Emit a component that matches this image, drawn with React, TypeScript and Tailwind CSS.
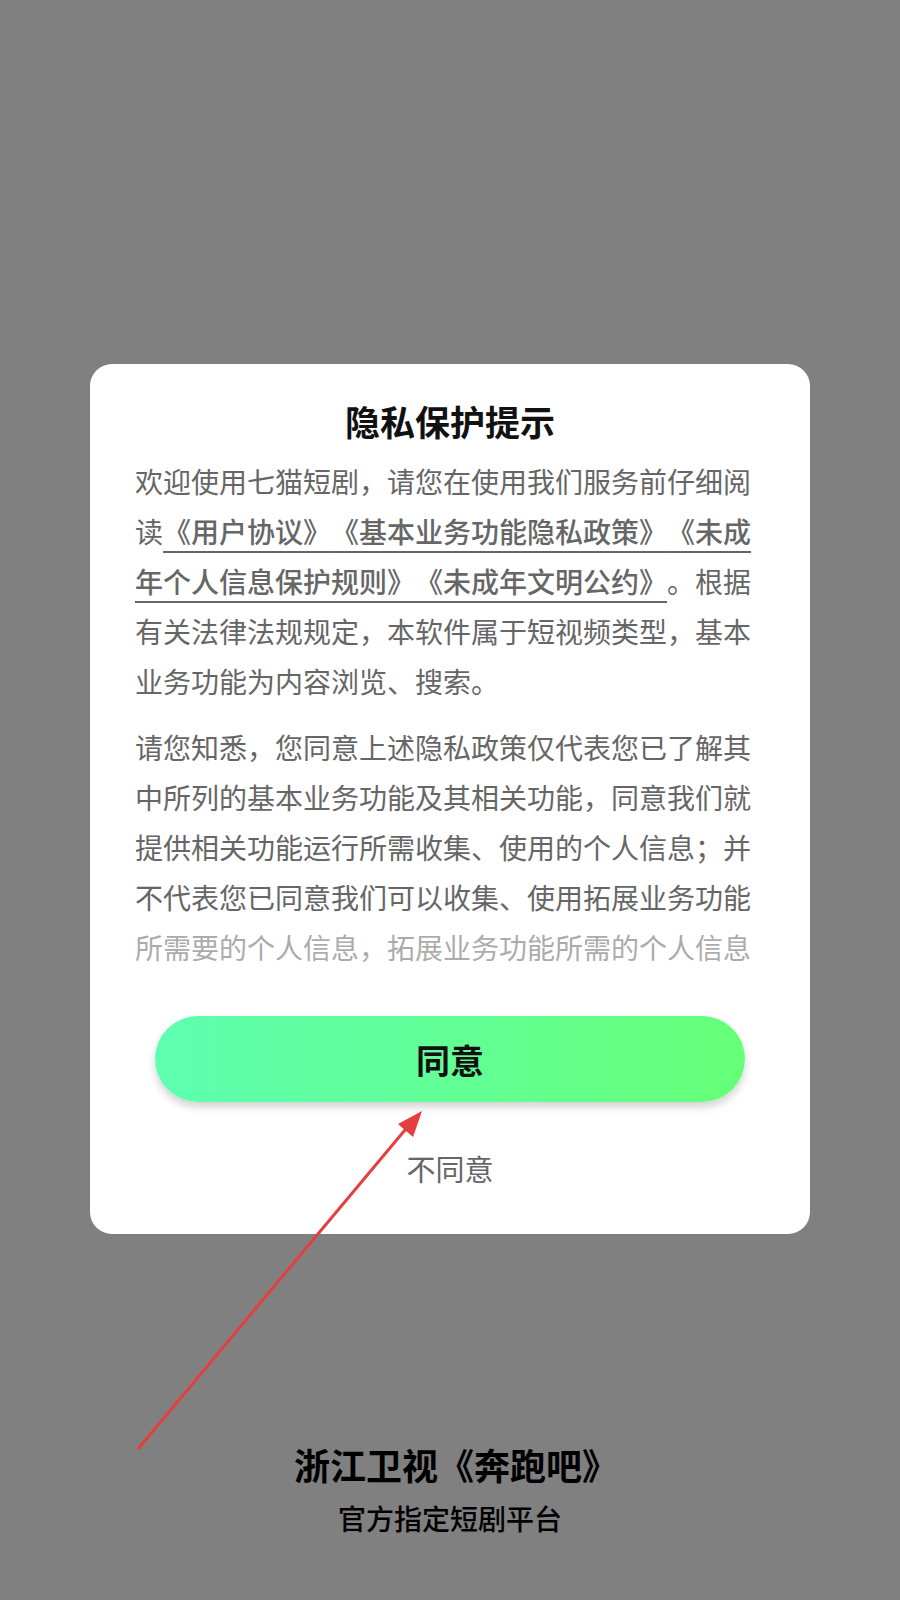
import React from 'react'

const FONT = { fontFamily: '"Noto Sans CJK SC", "Noto Sans", sans-serif' }

const LINKS = ['《用户协议》', '《基本业务功能隐私政策》', '《未成年个人信息保护规则》', '《未成年文明公约》']

export default function App() {
  return (
    <div className="relative w-full h-[1600px] bg-[#808080] flex flex-col items-center [text-spacing-trim:space-all]" style={FONT}>
      {/* Privacy dialog */}
      <div className="mt-[364px] w-[720px] rounded-[22px] bg-white flex flex-col items-center pt-[33px] pb-[46px]">
        <h1 className="text-[35px] leading-[48px] font-bold text-[#111]">隐私保护提示</h1>

        <div className="relative mt-[11px] w-full px-[45px] h-[516px] overflow-hidden text-[28px] leading-[50px] text-[#666]">
          <p>
            欢迎使用七猫短剧，请您在使用我们服务前仔细阅读
            {LINKS.map(l => (
              <span key={l} className="font-medium underline underline-offset-[8px] decoration-[2px]">{l}</span>
            ))}
            。根据有关法律法规规定，本软件属于短视频类型，基本业务功能为内容浏览、搜索。
          </p>
          <p className="mt-4">
            请您知悉，您同意上述隐私政策仅代表您已了解其中所列的基本业务功能及其相关功能，同意我们就提供相关功能运行所需收集、使用的个人信息；并不代表您已同意我们可以收集、使用拓展业务功能所需要的个人信息，拓展业务功能所需的个人信息我们将在您使用具体功能时单独征求您的同意。
          </p>
          {/* fade on the last visible line */}
          <div className="absolute left-0 right-0 bottom-0 h-[50px] bg-white/45" />
        </div>

        <button
          type="button"
          className="mt-[44px] w-[590px] h-[86px] rounded-full bg-gradient-to-r from-[#5effb0] to-[#66ff77] shadow-[0_5px_8px_rgba(0,0,0,0.18)] text-[34px] font-bold text-[#111]"
        >
          同意
        </button>

        <button type="button" className="mt-[46px] text-[29px] leading-[40px] text-[#666]">
          不同意
        </button>
      </div>

      <p className="mt-[205px] pl-[12px] text-[36px] leading-[50px] font-bold text-black">浙江卫视《奔跑吧》</p>
      <p className="mt-[9px] text-[28px] leading-[40px] font-medium text-black">官方指定短剧平台</p>

      {/* annotation arrow */}
      <svg className="absolute left-0 top-0 pointer-events-none" width="900" height="1600" viewBox="0 0 900 1600">
        <line x1="138" y1="1449" x2="410" y2="1124" stroke="#e53e3e" strokeWidth="3" />
        <polygon points="422,1111 413,1137 398,1124" fill="#e53e3e" />
      </svg>
    </div>
  )
}
